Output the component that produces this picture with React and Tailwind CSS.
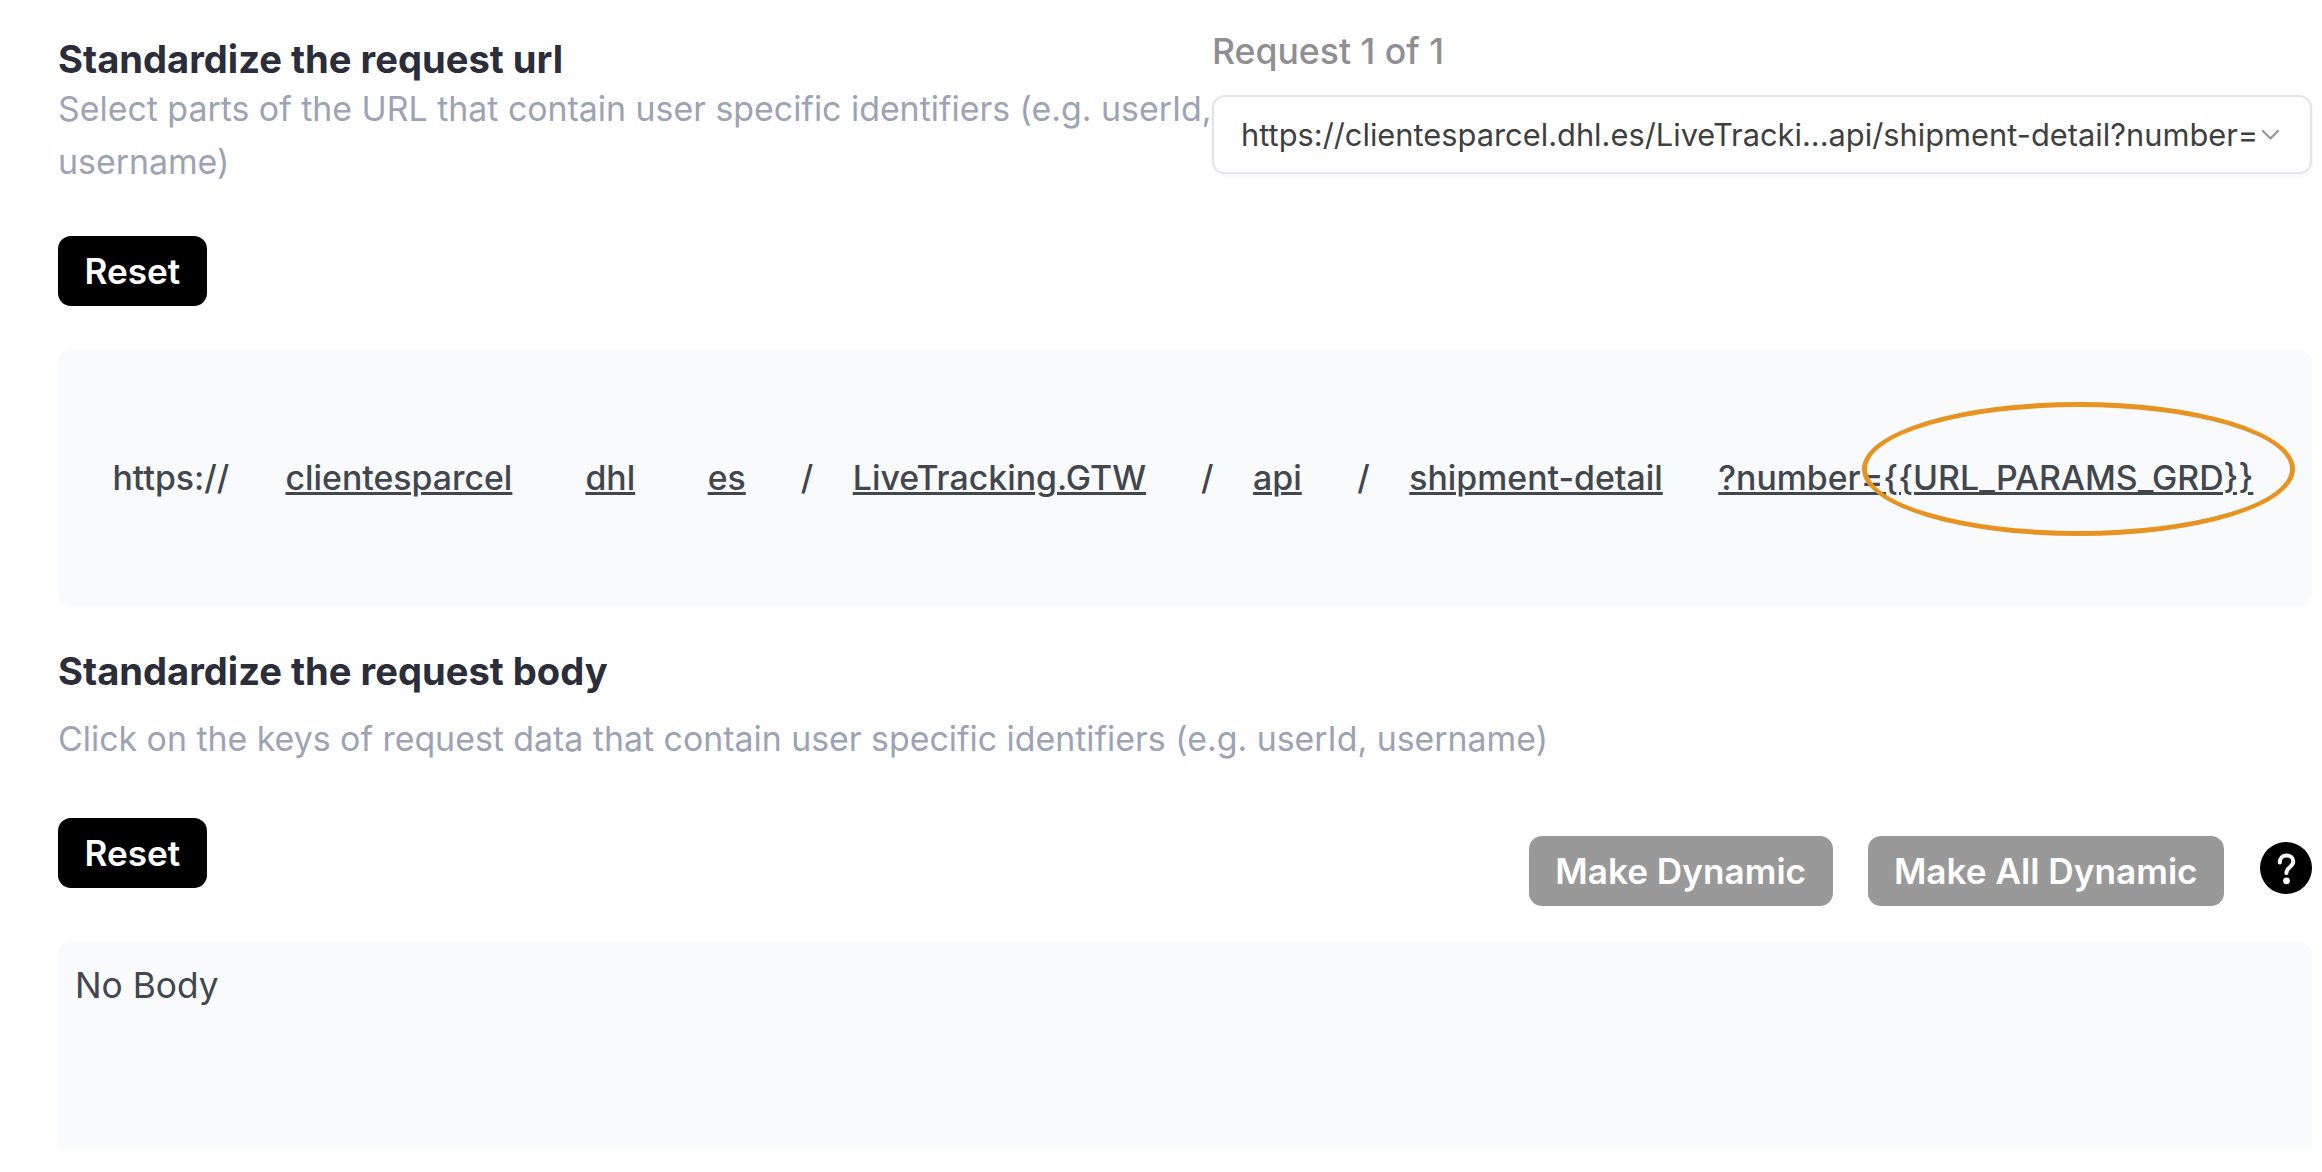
import React from "react";

const SEGMENTS = [
  { text: "https://", spacing: "ml-[54.5px] w-[117px]" },
  { text: "clientesparcel", spacing: "ml-[56px]", link: true },
  { text: "dhl", spacing: "ml-[73px]", link: true },
  { text: "es", spacing: "ml-[72.5px]", link: true },
  { text: "/", spacing: "ml-[55px] w-[52px]" },
  { text: "LiveTracking.GTW", link: true },
  { text: "/", spacing: "ml-[55px] w-[52px]" },
  { text: "api", link: true },
  { text: "/", spacing: "ml-[55.5px] w-[52px]" },
  { text: "shipment-detail", link: true },
  { text: "?number={{URL_PARAMS_GRD}}", spacing: "ml-[55.5px]", link: true },
];

function Heading({ children }) {
  return (
    <h2 className="h-[45px] text-[38.15px] leading-[45px] font-bold whitespace-nowrap text-[#2b2d3a]">
      {children}
    </h2>
  );
}

function Description({ children }) {
  return <p className="text-[33.86px] leading-[53px] whitespace-nowrap text-[#9ca3b4]">{children}</p>;
}

function Button({ children, disabled = false }) {
  return (
    <button
      disabled={disabled}
      className={
        "flex h-[70px] items-center rounded-[13px] px-[26.4px] text-[35.2px] leading-[53px] font-semibold whitespace-nowrap text-white " +
        (disabled ? "bg-[#999999]" : "bg-black")
      }
    >
      {children}
    </button>
  );
}

function HelpIcon() {
  return (
    <svg className="h-[52px] w-[52px]" viewBox="0 0 52 52" fill="none">
      <circle cx="26" cy="26" r="26" fill="#000" />
      <path
        d="M19.8 20.4C19.8 16.2 22.6 13.5 26.5 13.5C30.5 13.5 33.3 16 33.3 19.6C33.3 25 26.4 25 26.4 31"
        stroke="#fff"
        strokeWidth="4"
        strokeLinecap="round"
        strokeLinejoin="round"
      />
      <circle cx="26.5" cy="38.8" r="3.4" fill="#fff" />
    </svg>
  );
}

export default function App() {
  return (
    <main className="flex h-[1172px] w-[2322px] flex-col overflow-hidden bg-white pr-[10px] pl-[58px] font-['Inter',sans-serif]">
      <header className="flex h-[236px] items-start">
        <div className="w-[1154px] pt-[37px]">
          <Heading>Standardize the request url</Heading>
          <Description>
            Select parts of the URL that contain user specific identifiers (e.g. userId,
            <br />
            username)
          </Description>
        </div>
        <div className="w-[1100px] pt-[25px]">
          <div className="h-[70px] text-[35.6px] leading-[53px] font-medium text-[#8e8e93]">Request 1 of 1</div>
          <div className="flex h-[79px] items-center rounded-[13px] border-2 border-[#e4e4ea] bg-white pl-[27px] shadow-[0_2px_4px_rgba(0,0,0,0.05)]">
            <span className="w-[1020px] pt-[1px] text-[30.82px] whitespace-nowrap text-[#3f3f3f]">
              https://clientesparcel.dhl.es/LiveTracki...api/shipment-detail?number=
            </span>
            <svg className="h-[12px] w-[19px] shrink-0" viewBox="0 0 19 12" fill="none">
              <path d="M2 2L9.5 9.5L17 2" stroke="#999" strokeWidth="2.4" strokeLinecap="round" strokeLinejoin="round" />
            </svg>
          </div>
        </div>
      </header>

      <div className="flex">
        <Button>Reset</Button>
      </div>

      <section className="relative mt-[44px] flex h-[256px] shrink-0 items-center rounded-[12px] bg-[#f9fafc] pb-[2px] text-[33.85px] leading-[53px] font-medium text-[#42464d]">
        {SEGMENTS.map((s, i) => (
          <span
            key={i}
            className={
              "shrink-0 whitespace-nowrap " +
              (s.spacing || "") +
              (s.link ? " underline decoration-[3px] underline-offset-[2px]" : "")
            }
          >
            {s.text}
          </span>
        ))}
        <div className="absolute top-[51.5px] left-[1804px] h-[134px] w-[433px] rounded-[50%] border-[5px] border-[#e79322]" />
      </section>

      <section className="flex flex-col pt-[43px]">
        <Heading>Standardize the request body</Heading>
        <div className="mt-[18px]">
          <Description>
            Click on the keys of request data that contain user specific identifiers (e.g. userId, username)
          </Description>
        </div>
        <div className="mt-[53px] flex h-[124px] items-start justify-between">
          <Button>Reset</Button>
          <div className="flex items-start pt-[18px]">
            <Button disabled>Make Dynamic</Button>
            <div className="ml-[35px]">
              <Button disabled>Make All Dynamic</Button>
            </div>
            <div className="mt-[6px] ml-[36px]">
              <HelpIcon />
            </div>
          </div>
        </div>
        <div className="h-[207px] rounded-t-[12px] bg-[#f9fafc] pt-[17px] pl-[17px] text-[35.3px] leading-[53px] text-[#42464d]">
          No Body
        </div>
      </section>
    </main>
  );
}
